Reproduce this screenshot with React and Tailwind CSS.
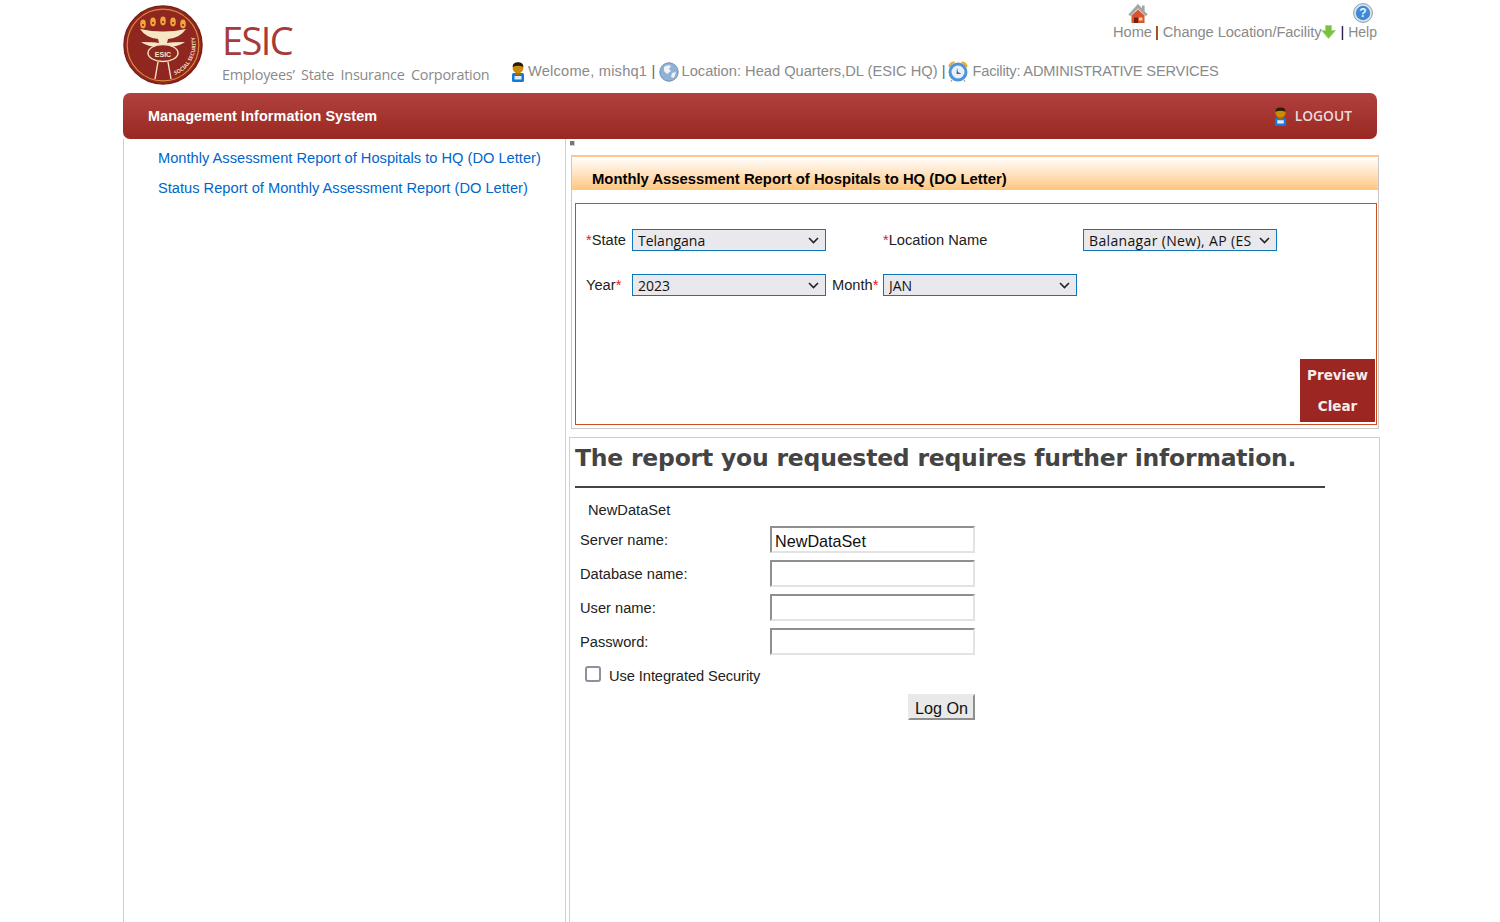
import React from "react";

const sans = "font-['Liberation_Sans',Arial,sans-serif]";

function Seal() {
  return (
    <svg width="80" height="80" viewBox="0 0 80 80" className="block">
      <circle cx="40" cy="40" r="39" fill="#8f2620" stroke="#7c1f1a" strokeWidth="1.5" />
      <circle cx="40" cy="40" r="35.8" fill="none" stroke="#d98a3a" strokeWidth="1.2" />
      {[20, 30, 40, 50, 60].map((x, i) => (
        <g key={x}>
          <ellipse cx={x} cy={i === 2 ? 16 : i === 0 || i === 4 ? 19 : 17} rx="2.8" ry="4.4" fill="#f0a63a" />
          <circle cx={x} cy={i === 2 ? 17 : i === 0 || i === 4 ? 20 : 18} r="1" fill="#7c1f1a" />
        </g>
      ))}
      <path d="M17 24 Q40 29 63 24 Q57 33 45 34 L44 38 L36 38 L35 34 Q23 33 17 24 Z" fill="#f6e6c4" />
      <path d="M18 37 Q30 37 36 38 L44 38 Q50 37 62 37 Q54 43 40 42 Q26 43 18 37 Z" fill="#f6e6c4" />
      <ellipse cx="40" cy="48" rx="15" ry="8.5" fill="#8f2620" stroke="#f6e6c4" strokeWidth="1.4" />
      <text x="40" y="52" textAnchor="middle" fontSize="7" fontWeight="700" fill="#f6e6c4" fontFamily="'Liberation Sans',sans-serif">ESIC</text>
      <path d="M35 57 L32 74 M45 57 L48 74" stroke="#f6e6c4" strokeWidth="1.4" fill="none" />
      <path id="sealR" d="M52 70 A33 33 0 0 0 70 26" fill="none" />
      <text fontSize="5.4" fontWeight="700" fill="#efd9b5" fontFamily="'Noto Sans',sans-serif">
        <textPath href="#sealR">SOCIAL SECURITY</textPath>
      </text>
    </svg>
  );
}

function Person({ w = 16, h = 20 }) {
  return (
    <svg width={w} height={h} viewBox="0 0 16 20" className="block shrink-0">
      <rect x="2" y="11" width="12" height="9" rx="1.5" fill="#1479dd" />
      <rect x="4.5" y="14" width="7" height="3.5" fill="#dcecfb" />
      <circle cx="8" cy="6" r="5.4" fill="#c98a08" />
      <path d="M2.6 5 Q2.6 0.3 8 0.3 Q13.4 0.3 13.4 5 Q8 2.5 2.6 5 Z" fill="#2a1a08" />
      <rect x="5.5" y="11" width="5" height="2" fill="#a56f05" />
    </svg>
  );
}

function Globe() {
  return (
    <svg width="20" height="20" viewBox="0 0 20 20" className="block shrink-0">
      <circle cx="10" cy="10" r="9.2" fill="#8fb2d6" stroke="#6f8fb3" />
      <path d="M5 5 Q9 2 12 4 L10 7 L12 9 L8 12 L5 9 Z M13 11 L17 10 L15 16 L12 15 Z" fill="#f0f4f8" />
    </svg>
  );
}

function Clock() {
  return (
    <svg width="20" height="21" viewBox="0 0 20 21" className="block shrink-0">
      <path d="M1 6 Q1 1 6.5 1 Z M19 6 Q19 1 13.5 1 Z" fill="#f0b93c" stroke="#e0a020" />
      <path d="M4 19 L3 20.5 M16 19 L17 20.5" stroke="#999" strokeWidth="1.3" />
      <circle cx="10" cy="11" r="8" fill="#e8f1fa" stroke="#4f94d8" strokeWidth="3" />
      <path d="M9 6.5 L10 11 L13.5 13 L8.5 13 Z" fill="#47688c" />
    </svg>
  );
}

function Home() {
  return (
    <svg width="20" height="20" viewBox="0 0 20 20" className="block">
      <path d="M0.5 11.5 L10 1 L19.5 11.5 L17.5 13 L10 5.5 L2.5 13 Z" fill="#a3a3a3" stroke="#c4c4c4" strokeWidth=".6" />
      <rect x="14" y="2.5" width="2.6" height="5.5" fill="#a3a3a3" />
      <path d="M3.5 12.5 L10 6.5 L16.5 12.5 V20 H3.5 Z" fill="#d9542f" />
      <rect x="6" y="14.5" width="4" height="5.5" fill="#6f2012" />
      <rect x="11" y="14.5" width="3.5" height="3" fill="#f5d6b0" />
    </svg>
  );
}

function HelpIcon() {
  return (
    <svg width="20" height="20" viewBox="0 0 20 20" className="block">
      <circle cx="10" cy="10" r="9.4" fill="#dbe5ee" stroke="#8b9aa8" />
      <circle cx="10" cy="10" r="7.2" fill="#3f8ad6" />
      <text x="10" y="14.2" textAnchor="middle" fontSize="12" fontWeight="700" fill="#eaf3fb" fontFamily="'Liberation Sans',sans-serif">?</text>
    </svg>
  );
}

function DownArrow() {
  return (
    <svg width="15" height="14" viewBox="0 0 15 14" className="block shrink-0">
      <path d="M4.5 0.5 H10.5 V5.5 H14.5 L7.5 13.5 L0.5 5.5 H4.5 Z" fill="#7ac143" stroke="#a9da7c" />
    </svg>
  );
}

function Select({ value, className = "", textClass = "" }) {
  return (
    <div className={`h-[22px] flex items-center justify-between bg-[#e9e9ed] border border-[#0f76bb] pl-[5px] pr-[6px] text-[14px] text-[#111] font-['Open_Sans',sans-serif] ${className}`}>
      <span className={`whitespace-nowrap overflow-hidden ${textClass}`}>{value}</span>
      <svg width="11" height="7" viewBox="0 0 11 7" className="shrink-0 ml-1">
        <path d="M1 1 L5.5 5.5 L10 1" fill="none" stroke="#222" strokeWidth="1.6" />
      </svg>
    </div>
  );
}

function Field({ label, value = "" }) {
  return (
    <div className="flex items-center h-[28px] mb-[6px]">
      <div className="w-[195px] pl-[5px] text-[14.67px] text-[#222] mt-[2px]">{label}</div>
      <div className="w-[205px] h-[27px] border-2 border-t-[#8f8f8f] border-l-[#8f8f8f] border-r-[#e3e3e3] border-b-[#e3e3e3] pl-[3px] text-[16.2px] leading-[27px] text-[#111]">
        {value}
      </div>
    </div>
  );
}

export default function App() {
  return (
    <div className={`w-[1500px] h-[922px] overflow-hidden bg-white ${sans}`}>
      <div className="w-[1257px] ml-[123px]">
        <header className="h-[93px] flex">
          <div className="pt-[5px]"><Seal /></div>
          <div className="ml-[19px] w-[288px] pt-[18px]">
            <div className="text-[38px] leading-[45px] text-[#a83a3a] font-['Open_Sans',sans-serif] tracking-[-1.6px]">ESIC</div>
            <div className="text-[14.4px] leading-[20px] mt-[2px] text-[#8a8a8a] font-['Open_Sans',sans-serif] whitespace-nowrap tracking-[-0.25px] [word-spacing:3px]">Employees’ State Insurance Corporation</div>
          </div>
          <div className="flex-1 flex flex-col">
            <div className="h-[42px] flex justify-end pr-[3px] text-[14.67px] text-[#8a8a8a]">
              <div className="flex flex-col items-center"><div className="mt-[3px] ml-[11px]"><Home /></div><span className="leading-[18px]">Home</span></div>
              <div className="mt-[23px] leading-[18px] text-black ml-[3px] mr-[4px]">|</div>
              <div className="mt-[22px] leading-[18px] flex items-center tracking-[-0.08px]">Change Location/Facility<DownArrow /></div>
              <div className="mt-[23px] leading-[18px] text-black mx-[4px]">|</div>
              <div className="flex flex-col items-center"><div className="mt-[3px]"><HelpIcon /></div><span className="leading-[18px] text-[14px]">Help</span></div>
            </div>
            <div className="flex items-center h-[21px] mt-[19px] text-[14.67px] text-[#8a8a8a] whitespace-nowrap">
              <Person />
              <span className="ml-[2px] -mt-[2px] tracking-[0.2px]">Welcome, mishq1 <span className="text-[#666]">|</span></span>
              <span className="ml-[3px]"><Globe /></span>
              <span className="ml-[3px] -mt-[2px]">Location: Head Quarters,DL (ESIC HQ) <span className="text-[#666]">|</span></span>
              <span className="ml-[3px]"><Clock /></span>
              <span className="ml-[4px] -mt-[2px] tracking-[-0.2px]">Facility: ADMINISTRATIVE SERVICES</span>
            </div>
          </div>
        </header>

        <div className="w-[1254px] h-[46px] rounded-[7px] bg-gradient-to-b from-[#b0413c] to-[#9a2722] flex items-center justify-between pl-[25px] pr-[25px]">
          <div className="text-white font-bold text-[14.4px] tracking-[0.1px] pt-[1px]">Management Information System</div>
          <div className="flex items-center">
            <Person w={15} h={19} />
            <span className="ml-[7px] font-['Open_Sans',sans-serif] font-semibold text-[13.8px] text-[#ebdcdc]">LOGOUT</span>
          </div>
        </div>

        <div className="flex h-[783px]">
          <aside className="w-[443px] border-l border-r border-[#cfcfcf] pt-[9px] pl-[34px] text-[14.67px] text-[#0066cc] shrink-0">
            <div className="h-[30px] leading-[20px] whitespace-nowrap">Monthly Assessment Report of Hospitals to HQ (DO Letter)</div>
            <div className="leading-[20px] whitespace-nowrap">Status Report of Monthly Assessment Report (DO Letter)</div>
          </aside>

          <main className="flex-1 flex flex-col pl-[4px]">
            <div className="w-[5px] h-[5px] mt-[2px] bg-[#777] border-r border-b border-[#ccc]"></div>
            <section className="ml-[1px] mt-[9px] w-[808px] h-[274px] border border-[#c9c9c9] border-t-[#ffc58a] border-t-2">
              <div className="h-[33px] bg-gradient-to-b from-white to-[#ffc67c] pt-[13px] pl-[20px] text-[14.84px] font-bold leading-[18px] text-black whitespace-nowrap">
                Monthly Assessment Report of Hospitals to HQ (DO Letter)
              </div>
              <div className="relative mt-[13px] ml-[3px] w-[802px] h-[222px] border border-[#cc4d1f] text-[14.67px] text-[#222]">
                <div className="flex items-center pt-[25px] pl-[10px]">
                  <div className="w-[46px]"><span className="text-[#e8141c]">*</span>State</div>
                  <Select value="Telangana" className="w-[194px]" />
                  <div className="ml-[57px] w-[200px]"><span className="text-[#e8141c]">*</span>Location Name</div>
                  <Select value="Balanagar (New), AP (ES" className="w-[194px]" textClass="tracking-[0.35px]" />
                </div>
                <div className="flex items-center pt-[23px] pl-[10px]">
                  <div className="w-[46px]">Year<span className="text-[#e8141c]">*</span></div>
                  <Select value="2023" className="w-[194px]" />
                  <div className="ml-[6px] w-[51px]">Month<span className="text-[#e8141c]">*</span></div>
                  <Select value="JAN" className="w-[194px]" />
                </div>
                <div className="absolute right-[1px] bottom-[2px] w-[75px] h-[63px] bg-[#9c2722] text-center font-['DejaVu_Sans',sans-serif] font-bold text-[13.5px] text-[#f6ecec]">
                  <div className="h-[31px] leading-[33px]">Preview</div>
                  <div className="leading-[33px]">Clear</div>
                </div>
              </div>
            </section>

            <section className="-ml-[1px] mt-[8px] w-[811px] flex-1 border border-[#cfcfcf] border-b-0 pl-[5px]">
              <h1 className="mt-[3px] h-[37px] text-[23.5px] tracking-[-0.22px] leading-[35px] font-bold font-['DejaVu_Sans',sans-serif] text-[#444] whitespace-nowrap">The report you requested requires further information.</h1>
              <div className="w-[750px] h-[2px] mt-[8px] bg-[#444]"></div>
              <div className="pl-[13px] mt-[13px] h-[24px] leading-[18px] text-[14.67px] text-[#222]">NewDataSet</div>
              <div>
                <Field label="Server name:" value="NewDataSet" />
                <Field label="Database name:" />
                <Field label="User name:" />
                <Field label="Password:" />
              </div>
              <div className="flex items-center h-[26px] mt-[3px] pl-[10px] text-[14.67px] text-[#222]">
                <div className="w-[16px] h-[16px] rounded-[3px] border-2 border-[#8f8f9d] bg-white"></div>
                <span className="ml-[8px] mt-[3px] tracking-[-0.08px]">Use Integrated Security</span>
              </div>
              <div className="w-[400px] flex justify-end mt-[7px]">
                <div className="w-[67px] h-[26px] bg-[#e9e9e9] border-2 border-t-[#e9e9e9] border-l-[#e9e9e9] border-r-[#8f8f8f] border-b-[#8f8f8f] text-center text-[16.2px] leading-[25px] text-[#111]">Log On</div>
              </div>
            </section>
          </main>
        </div>
      </div>
    </div>
  );
}
